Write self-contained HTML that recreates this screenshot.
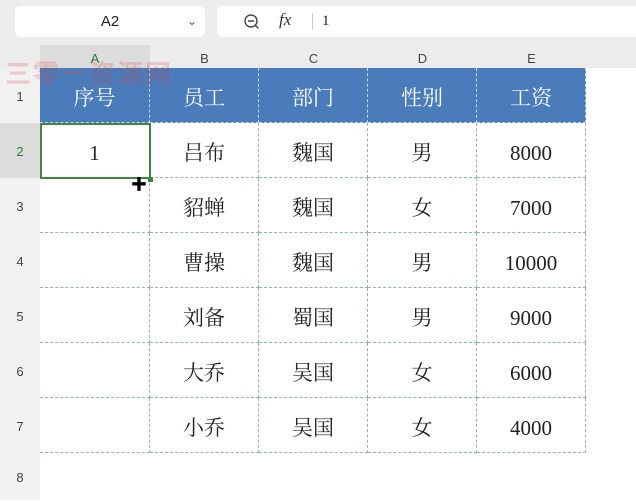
<!DOCTYPE html><html><head><meta charset="utf-8"><style>
*{margin:0;padding:0;box-sizing:border-box}
body{width:636px;height:500px;overflow:hidden;background:#fff;font-family:"Liberation Sans","Noto Sans CJK SC",sans-serif;position:relative}
.top{position:absolute;left:0;top:0;width:636px;height:45px;background:#eceeee}
.nb{position:absolute;left:15px;top:6px;width:190px;height:31px;background:#fff;border-radius:5px;font-size:15px;text-align:center;line-height:31px;color:#222}
.fb{position:absolute;left:217px;top:6px;width:430px;height:31px;background:#fff;border-radius:5px}
.ch{position:absolute;top:45px;height:23px;background:#ececec;font-size:13px;color:#444;text-align:center;line-height:27px}
.rh{position:absolute;left:0;width:40px;background:#f1f1f1;font-size:13px;color:#444;text-align:center}
.c{position:absolute;font-family:"Liberation Serif","Noto Serif CJK SC",serif;font-size:21px;text-align:center;color:#222;border-right:1px dashed #8fb0d0;border-bottom:1px dashed #8fb0d0;padding-top:5px}
.h{background:#4a7cbc;color:#fff;border-color:#c8d8ea}
</style></head><body>
<div class="top"></div>
<div class="nb">A2<span style="position:absolute;right:8px;top:0;font-size:12px;color:#555">&#8964;</span></div>
<div class="fb">
<svg style="position:absolute;left:26px;top:7px" width="18" height="18" viewBox="0 0 18 18"><circle cx="8" cy="8" r="6" fill="none" stroke="#444" stroke-width="1.4"/><path d="M5 8h6M12.5 12.5l3 3" stroke="#444" stroke-width="1.4"/></svg>
<span style="position:absolute;left:62px;top:4px;font-family:'Liberation Serif',serif;font-style:italic;font-size:17px;color:#333">fx</span>
<div style="position:absolute;left:95px;top:7px;width:1px;height:17px;background:#ccc"></div>
<span style="position:absolute;left:105px;top:7px;font-family:'Liberation Serif',serif;font-size:15px;color:#222">1</span>
</div>
<div class="ch" style="left:0;width:40px"></div>
<div class="ch" style="left:40px;width:110px;background:#dcdcdc;color:#2c7a3a">A</div>
<div class="ch" style="left:150px;width:109px">B</div>
<div class="ch" style="left:259px;width:109px">C</div>
<div class="ch" style="left:368px;width:109px">D</div>
<div class="ch" style="left:477px;width:109px">E</div>
<div class="ch" style="left:586px;width:50px"></div>
<div style="position:absolute;left:0;top:68px;width:40px;height:432px;background:#f1f1f1"></div>
<div class="rh" style="top:68px;height:55px;line-height:57px">1</div>
<div class="rh" style="top:123px;height:55px;line-height:57px;background:#dcdcdc;color:#2c7a3a">2</div>
<div class="rh" style="top:178px;height:55px;line-height:57px">3</div>
<div class="rh" style="top:233px;height:55px;line-height:57px">4</div>
<div class="rh" style="top:288px;height:55px;line-height:57px">5</div>
<div class="rh" style="top:343px;height:55px;line-height:57px">6</div>
<div class="rh" style="top:398px;height:55px;line-height:57px">7</div>
<div class="rh" style="top:453px;height:47px;line-height:49px">8</div>
<div class="c h" style="left:40px;top:68px;width:110px;height:55px;line-height:50px">序号</div>
<div class="c h" style="left:150px;top:68px;width:109px;height:55px;line-height:50px">员工</div>
<div class="c h" style="left:259px;top:68px;width:109px;height:55px;line-height:50px">部门</div>
<div class="c h" style="left:368px;top:68px;width:109px;height:55px;line-height:50px">性别</div>
<div class="c h" style="left:477px;top:68px;width:109px;height:55px;line-height:50px">工资</div>
<div id="g"></div>
<script>
var d=[["1","吕布","魏国","男","8000"],["","貂蝉","魏国","女","7000"],["","曹操","魏国","男","10000"],["","刘备","蜀国","男","9000"],["","大乔","吴国","女","6000"],["","小乔","吴国","女","4000"]];
var xs=[40,150,259,368,477,586],h="";
d.forEach(function(r,i){r.forEach(function(v,j){h+='<div class="c" style="left:'+xs[j]+'px;top:'+(123+55*i)+'px;width:'+(xs[j+1]-xs[j])+'px;height:55px;line-height:50px">'+v+'</div>';});});
document.getElementById('g').innerHTML=h;
</script>
<div style="position:absolute;left:40px;top:123px;width:111px;height:56px;border:2px solid #3f8a3a"></div>
<div style="position:absolute;left:148px;top:177px;width:5px;height:5px;background:#3f8a3a"></div>
<div style="position:absolute;left:131px;top:178px;font-size:16px;color:#000;line-height:16px">✚</div>
<div style="position:absolute;left:5px;top:54px;font-size:26px;color:rgba(220,60,60,0.22);font-weight:bold;letter-spacing:2px;white-space:nowrap">三零一资源网</div>
</body></html>
